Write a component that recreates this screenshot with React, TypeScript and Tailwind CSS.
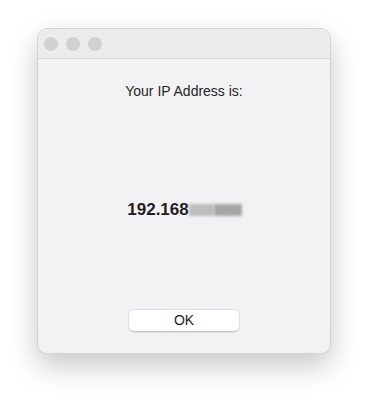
import React from 'react';

const App: React.FC = () => {
  return (
    <div className="w-[369px] h-[400px] bg-white pt-[28px] pl-[37px] font-['Liberation_Sans',Arial,sans-serif]">
      <div className="w-[294px] h-[326px] rounded-[10px] bg-[#f2f2f4] border border-[#d4d4d6] shadow-[0_12px_28px_rgba(0,0,0,0.22)] flex flex-col overflow-hidden">
        <div className="h-[30px] bg-[#ececee] border-b border-[#d8d8da] flex items-center gap-[8px] pl-[6px]">
          <span className="w-[14px] h-[14px] rounded-full bg-[#d1d1d3]"></span>
          <span className="w-[14px] h-[14px] rounded-full bg-[#d1d1d3]"></span>
          <span className="w-[14px] h-[14px] rounded-full bg-[#d1d1d3]"></span>
        </div>

        <div className="flex-1 flex flex-col items-center">
          <p className="mt-[24px] text-[14px] leading-[16px] text-[#262626]">Your IP Address is:</p>

          <div className="mt-[101px] flex items-center h-[20px] pl-[1px]">
            <span className="text-[17px] font-bold text-[#1e1e1e]">192.168</span>
            <span className="w-[25px] h-[12px] bg-[#bdbdbd] blur-[1.5px]"></span>
            <span className="w-[28px] h-[12px] bg-[#a6a6a6] blur-[1.5px]"></span>
          </div>

          <button className="mt-[90px] w-[110px] h-[21px] rounded-[5px] bg-white shadow-[0_0.5px_2px_rgba(0,0,0,0.25)] text-[14px] text-[#1e1e1e]">
            OK
          </button>
        </div>
      </div>
    </div>
  );
};

export default App;
